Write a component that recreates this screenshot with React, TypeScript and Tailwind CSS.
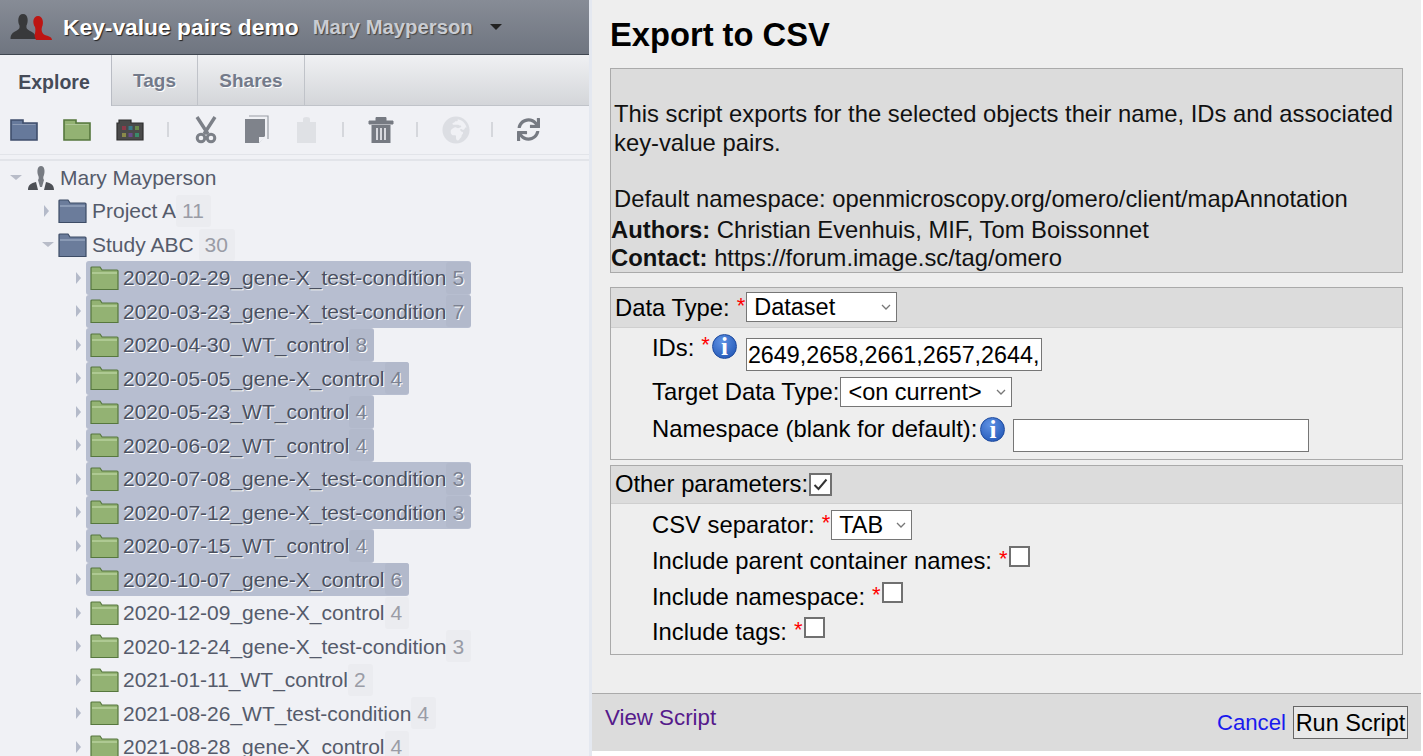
import React from 'react';
import { FaGlobeAfrica, FaSync } from 'react-icons/fa';

const Folder = ({ color }: { color: 'blue' | 'green' }) => (
  <svg width="29" height="24" viewBox="0 0 29 24" className="shrink-0">
    <path
      d="M1 23.5 V2 Q1 1 2 1 H10 L12 4 H27 Q28 4 28 5 V23.5 Z"
      fill={color === 'blue' ? '#6b7c9b' : '#93b273'}
      stroke={color === 'blue' ? '#3d4c66' : '#56773e'}
      strokeWidth="1.2"
    />
    <rect x="2" y="6" width="25" height="2" fill={color === 'blue' ? '#8a9ab5' : '#aec992'} />
  </svg>
);

const ToolFolder = ({ color, edge }: { color: string; edge: string }) => (
  <svg width="28" height="22" viewBox="0 0 28 22" className="shrink-0">
    <path d="M1 21 V1 H13 V4 H27 V21 Z" fill={color} stroke={edge} strokeWidth="1.6" />
    <path d="M2.5 5.5 H25.5" stroke="#ffffff40" strokeWidth="1" />
  </svg>
);

const Plate = () => (
  <svg width="28" height="22" viewBox="0 0 28 22" className="shrink-0">
    <path d="M1 21 V4 H3 V1 H15 V4 H27 V21 Z" fill="#4a4a4a" stroke="#2e2e2e" strokeWidth="1.2" />
    {[7, 14].map((y, j) =>
      [6, 12.5, 19].map((x, i) => (
        <rect key={`${x}-${y}`} x={x} y={y} width="4" height="4" fill={[['#8c3a4a', '#3a7a8a', '#6a8a4a'], ['#8a8a4a', '#6a4a8c', '#3a8a6a']][j][i]} />
      ))
    )}
  </svg>
);

const Scissors = () => (
  <svg width="22" height="28" viewBox="0 0 22 28" className="shrink-0">
    <path d="M2 1 L13 18 M20 1 L9 18" fill="none" stroke="#7c8088" strokeWidth="3.4" />
    <circle cx="6" cy="22" r="3.8" fill="none" stroke="#7c8088" strokeWidth="3" />
    <circle cx="16" cy="22" r="3.8" fill="none" stroke="#7c8088" strokeWidth="3" />
  </svg>
);

const Copy = () => (
  <svg width="25" height="29" viewBox="0 0 25 29" className="shrink-0">
    <path d="M5 1 H24 V24" fill="none" stroke="#9a9ea6" strokeWidth="1.2" />
    <path d="M1 4 H21 V21 L15 28 H1 Z" fill="#7f838b" />
    <path d="M15 28 V22 H21 Z" fill="#f0f1f5" />
  </svg>
);

const Paste = () => (
  <svg width="21" height="28" viewBox="0 0 21 28" className="shrink-0">
    <path d="M1 6 H7 V3 Q7 1 10.5 1 Q14 1 14 3 V6 H20 V27 H1 Z" fill="#dfe1e5" />
  </svg>
);

const Trash = () => (
  <svg width="26" height="28" viewBox="0 0 26 28" className="shrink-0">
    <path d="M1 5 H25 V8 H1 Z M8 5 V1.5 H18 V5" fill="#767a82" stroke="#767a82" strokeWidth="1" />
    <path d="M3.5 9 H22.5 V27 H3.5 Z" fill="#767a82" />
    <path d="M9 12 V24 M13 12 V24 M17 12 V24" stroke="#f0f1f5" strokeWidth="1.6" />
  </svg>
);

const Owner = () => (
  <svg width="28" height="26" viewBox="0 0 28 26" className="shrink-0">
    <path d="M14 1 C10 1 10 7 11 10 C12 12 12 14 11 15 L13 22 H15 L17 15 C16 14 16 12 17 10 C18 7 18 1 14 1 Z" fill="#777b82" />
    <path d="M1 25 C1 20 4 18 9 17 L11 25 Z M27 25 C27 20 24 18 19 17 L17 25 Z" fill="#4d5056" />
  </svg>
);

const Groups = () => (
  <svg width="43" height="28" viewBox="0 0 43 28" className="shrink-0">
    <path d="M13 1 C7.5 1 7.5 9 9.5 12.5 C10 15 9 16.5 6 18 C3 19.5 0.5 21 0.5 26 H26 C26 21 23 19.5 20 18 C17 16.5 16 15 16.5 12.5 C18.5 9 18.5 1 13 1 Z" fill="#38393b" />
    <path d="M28 3 C23 3 22 10 25 14 C26 17 25 20 24.5 23 L26 27 H42 C42 24 38 23 35 22 C32 21 31 17 32 14 C34 10 33 3 28 3 Z" fill="#bd1512" />
  </svg>
);

const Info = () => (
  <span className="inline-flex size-[25px] shrink-0 items-center justify-center rounded-full border border-[#1d4a9e] bg-[radial-gradient(circle_at_40%_30%,#5f92e4,#1a4fb0)] font-['Liberation_Serif',serif] text-[25px] font-bold leading-none text-white">
    i
  </span>
);

const Star = () => <span className="-mt-[4px] text-[22px] leading-none text-[#f00]">*</span>;

const Check = ({ checked, big }: { checked?: boolean; big?: boolean }) => (
  <span className={`inline-flex shrink-0 items-center justify-center border-2 border-[#707070] bg-white ${big ? 'size-[23px]' : 'size-[21px]'}`}>
    {checked && (
      <svg width="15" height="13" viewBox="0 0 15 13">
        <path d="M1.5 7 L5.5 11 L13.5 1.5" fill="none" stroke="#333" strokeWidth="2" />
      </svg>
    )}
  </span>
);

const Select = ({ label, className }: { label: string; className: string }) => (
  <span className={`inline-flex h-[30px] shrink-0 items-center justify-between border border-[#767676] bg-white pl-[7px] pr-[5px] text-[23.5px] text-black ${className}`}>
    {label}
    <svg width="10" height="6" viewBox="0 0 10 6">
      <path d="M1 1 L5 5 L9 1" fill="none" stroke="#777" strokeWidth="1.3" />
    </svg>
  </span>
);

const rows: { name: string; count: number; selected: boolean }[] = [
  { name: '2020-02-29_gene-X_test-condition', count: 5, selected: true },
  { name: '2020-03-23_gene-X_test-condition', count: 7, selected: true },
  { name: '2020-04-30_WT_control', count: 8, selected: true },
  { name: '2020-05-05_gene-X_control', count: 4, selected: true },
  { name: '2020-05-23_WT_control', count: 4, selected: true },
  { name: '2020-06-02_WT_control', count: 4, selected: true },
  { name: '2020-07-08_gene-X_test-condition', count: 3, selected: true },
  { name: '2020-07-12_gene-X_test-condition', count: 3, selected: true },
  { name: '2020-07-15_WT_control', count: 4, selected: true },
  { name: '2020-10-07_gene-X_control', count: 6, selected: true },
  { name: '2020-12-09_gene-X_control', count: 4, selected: false },
  { name: '2020-12-24_gene-X_test-condition', count: 3, selected: false },
  { name: '2021-01-11_WT_control', count: 2, selected: false },
  { name: '2021-08-26_WT_test-condition', count: 4, selected: false },
  { name: '2021-08-28_gene-X_control', count: 4, selected: false },
];

const Arrow = ({ open }: { open?: boolean }) =>
  open ? (
    <span className="size-0 shrink-0 border-x-[6px] border-t-[5px] border-x-transparent border-t-[#b8bcc8]" />
  ) : (
    <span className="size-0 shrink-0 border-y-[6px] border-l-[5px] border-y-transparent border-l-[#b4bac9]" />
  );

const Count = ({ n, selected }: { n: number; selected?: boolean }) => (
  <span className={`flex h-[32px] items-center rounded-[3px] pl-[6px] pr-[7px] ${selected ? 'bg-[#b2b9cb] text-[#7c8292]' : 'bg-[#ebecf0] text-[#9a9ca6]'}`}>{n}</span>
);

const Sep = () => <span className="block h-[15px] w-[2px] shrink-0 bg-[#d5d7dc]" />;

export default function App() {
  return (
    <div className="flex h-[756px] w-[1423px] overflow-hidden bg-white font-['Liberation_Sans',Arial,sans-serif]">
      {/* Left panel */}
      <div className="flex h-full w-[589px] shrink-0 flex-col bg-[#f0f1f5]">
        <div className="flex h-[55px] shrink-0 items-center border-b border-[#3f4650] bg-gradient-to-b from-[#878c96] to-[#6f7580] pl-[10px]">
          <Groups />
          <span className="ml-[10px] whitespace-nowrap text-[22.8px] font-bold text-white [text-shadow:1px_1px_1px_#222]">Key-value pairs demo</span>
          <span className="ml-[14px] whitespace-nowrap text-[20.3px] font-bold text-[#c9ccd2] [text-shadow:1px_1px_1px_#444]">Mary Mayperson</span>
          <span className="ml-[17px] size-0 border-x-[6px] border-t-[6px] border-x-transparent border-t-[#222]" />
        </div>
        <div className="flex h-[51px] shrink-0 bg-gradient-to-b from-[#f0f1f3] to-[#d3d5d9]">
          <div className="flex w-[112px] items-center justify-center border-r border-[#b9bcc4] bg-[#f0f1f5] pr-[3px] pt-[4px] text-[19.5px] font-bold text-[#454b58]">Explore</div>
          <div className="flex w-[86px] items-center justify-center border-r border-b border-[#c0c3c9] pt-[2px] text-[19px] font-bold text-[#737a8a] [text-shadow:1px_1px_0_#fff]">Tags</div>
          <div className="flex w-[107px] items-center justify-center border-r border-b border-[#c0c3c9] pt-[2px] text-[19px] font-bold text-[#737a8a] [text-shadow:1px_1px_0_#fff]">Shares</div>
          <div className="flex-1 border-b border-[#c0c3c9]" />
        </div>
        <div className="flex h-[49px] shrink-0 items-center border-b border-[#e2e4e9] pb-[1px] pl-[10px]">
          <ToolFolder color="#66799b" edge="#3f4e6c" />
          <div className="ml-[25px]"><ToolFolder color="#93b273" edge="#56773e" /></div>
          <div className="ml-[25px]"><Plate /></div>
          <div className="ml-[23px]"><Sep /></div>
          <div className="ml-[26px]"><Scissors /></div>
          <div className="ml-[27px]"><Copy /></div>
          <div className="ml-[27px]"><Paste /></div>
          <div className="ml-[25px]"><Sep /></div>
          <div className="ml-[24px]"><Trash /></div>
          <div className="ml-[22px]"><Sep /></div>
          <FaGlobeAfrica size={28} className="ml-[24px] shrink-0 text-[#dcdee3]" />
          <div className="ml-[21px]"><Sep /></div>
          <FaSync size={23} className="ml-[24px] shrink-0 text-[#767a82]" />
        </div>
        <div className="h-[6px] shrink-0 border-b-2 border-[#e2e4e9]" />
        <div className="flex-1 overflow-hidden text-[21px] text-[#555b6b]">
          <div className="flex h-[33px] items-center pl-[10px]">
            <Arrow open />
            <div className="ml-[5px]"><Owner /></div>
            <span className="ml-[5px]">Mary Mayperson</span>
          </div>
          <div className="flex h-[34px] items-center pl-[44px]">
            <Arrow />
            <div className="ml-[9px]"><Folder color="blue" /></div>
            <span className="ml-[5px] flex items-center">Project A<Count n={11} /></span>
          </div>
          <div className="flex h-[33px] items-center pl-[42px]">
            <Arrow open />
            <div className="ml-[4px]"><Folder color="blue" /></div>
            <span className="ml-[5px] flex items-center">Study ABC<span className="ml-[5px]"><Count n={30} /></span></span>
          </div>
          {rows.map(r => (
            <div key={r.name} className="flex h-[33.5px] items-center pl-[76px]">
              <Arrow />
              <span className={`ml-[5px] flex h-[33.5px] items-center whitespace-nowrap pl-[4px] ${r.selected ? 'rounded-[3px] bg-[#b7bed0] text-[#4a5060] [text-shadow:1px_1px_0_#fff]' : ''}`}>
                <Folder color="green" />
                <span className="ml-[4px]">{r.name}</span>
                <Count n={r.count} selected={r.selected} />
              </span>
            </div>
          ))}
        </div>
      </div>

      {/* Splitter */}
      <div className="h-full w-[3px] shrink-0 bg-[#e4e8f0]" />

      {/* Right panel */}
      <div className="flex h-[751px] w-[829px] shrink-0 flex-col bg-[#eeeeee] text-[23.8px] leading-[26px] text-black">
        <div className="flex-1 px-[18px]">
          <h1 className="pt-[16px] text-[32.7px] font-bold leading-[38px]">Export to CSV</h1>
          <div className="mt-[14px] h-[205px] w-[793px] border border-[#aaa] bg-[#dcdcdc] pt-[30px] text-[#111]">
            <p className="pl-[3px] leading-[29px]">This script exports for the selected objects their name, IDs and associated key-value pairs.</p>
            <p className="mt-[27px] pl-[3px] leading-[29px]">Default namespace: openmicroscopy.org/omero/client/mapAnnotation</p>
            <p className="mt-[3px] leading-[28px]"><b>Authors:</b> Christian Evenhuis, MIF, Tom Boissonnet</p>
            <p className="leading-[28px]"><b>Contact:</b> https://forum.image.sc/tag/omero</p>
          </div>

          <div className="mt-[14px] h-[173px] w-[793px] border border-[#aaa]">
            <div className="flex h-[40px] items-center gap-[7px] border-b border-[#cfcfcf] bg-[#dcdcdc] pl-[4px]">
              <span>Data Type:</span>
              <Star />
              <Select label="Dataset" className="-ml-[6px] -mt-[1px] w-[151px]" />
            </div>
            <div className="pl-[41px]">
              <div className="flex h-[43px] items-start">
                <span className="mt-[7px]">IDs:</span>
                <span className="ml-[7px] mt-[3px]"><Star /></span>
                <span className="ml-[2px] mt-[6px]"><Info /></span>
                <span className="ml-[9px] mt-[10px] flex h-[33px] w-[296px] items-center overflow-hidden whitespace-nowrap border border-[#767676] bg-white pl-[1px] text-[23.3px]">2649,2658,2661,2657,2644,</span>
              </div>
              <div className="flex h-[37px] items-center pt-[5px]">
                <span>Target Data Type:</span>
                <Select label="<on current>" className="ml-[1px] w-[172px]" />
              </div>
              <div className="flex h-[36px] items-start">
                <span className="mt-[8px]">Namespace (blank for default):</span>
                <span className="ml-[3px] mt-[9px]"><Info /></span>
                <span className="ml-[8px] mt-[11px] h-[33px] w-[296px] shrink-0 border border-[#767676] bg-white" />
              </div>
            </div>
          </div>

          <div className="mt-[5px] h-[190px] w-[793px] border border-[#aaa]">
            <div className="flex h-[38px] items-center gap-[1px] border-b border-[#cfcfcf] bg-[#dcdcdc] pb-[1px] pl-[4px]">
              <span>Other parameters:</span>
              <span className="-mt-[3px]"><Check checked big /></span>
            </div>
            <div className="pl-[41px]">
              <div className="flex h-[39px] items-center gap-[7px] pt-[3px]">
                <span>CSV separator:</span>
                <Star />
                <Select label="TAB" className="-ml-[6px] w-[81px]" />
              </div>
              <div className="flex h-[36px] items-center gap-[7px]">
                <span>Include parent container names:</span>
                <Star />
                <span className="-mt-[4px] -ml-[6px]"><Check /></span>
              </div>
              <div className="flex h-[36px] items-center gap-[7px]">
                <span>Include namespace:</span>
                <Star />
                <span className="-mt-[4px] -ml-[6px]"><Check /></span>
              </div>
              <div className="-mt-[1px] flex h-[35px] items-center gap-[7px]">
                <span>Include tags:</span>
                <Star />
                <span className="-mt-[4px] -ml-[6px]"><Check /></span>
              </div>
            </div>
          </div>
        </div>

        <div className="flex h-[58px] shrink-0 items-start justify-between border-t border-[#aaa] bg-[#dcdcdc] pl-[13px] pr-[13px] text-[23.5px]">
          <span className="pt-[11px] text-[22.3px] text-[#551a8b]">View Script</span>
          <div className="flex items-center gap-[7px] pt-[12px]">
            <span className="text-[22.2px] text-[#1a1aee]">Cancel</span>
            <span className="flex h-[33px] w-[115px] items-center justify-center whitespace-nowrap border border-[#666] bg-[#e8e8e8]">Run Script</span>
          </div>
        </div>
      </div>
    </div>
  );
}
